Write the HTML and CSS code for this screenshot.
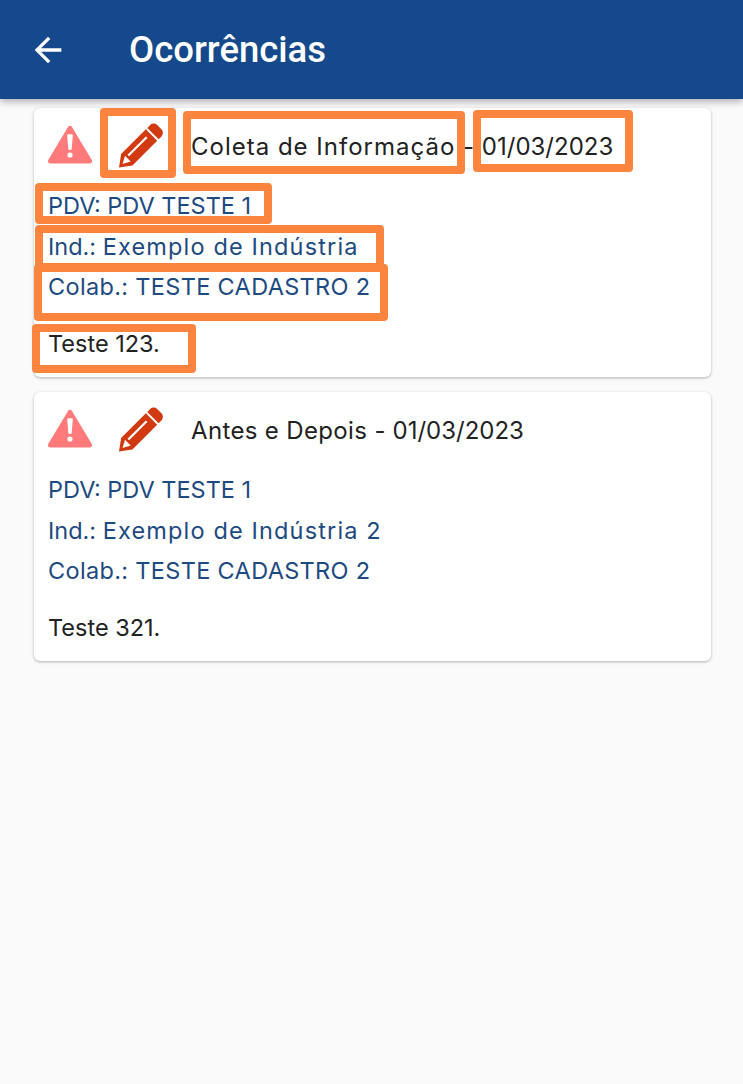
FILE: index.html
```html
<!DOCTYPE html>
<html lang="en">
<head>
    <meta charset="UTF-8">
    <meta name="viewport" content="width=device-width, initial-scale=1.0">
    <title>Ocorrências</title>
    <link rel="stylesheet" href="styles.css">
</head>
<body>
    <svg class="icon-defs">
        <symbol id="alert" viewBox="0 0 44 39">
            <path class="alert-shape" d="M22 3.5L41.5 36H2.5Z"/>
            <path class="alert-mark" d="M19.2 10.5a1.2 1.2 0 0 1 1.2-1.2h3.2a1.2 1.2 0 0 1 1.2 1.2L23.7 24a1 1 0 0 1-1 1h-1.4a1 1 0 0 1-1-1Z"/>
            <circle class="alert-mark" cx="22" cy="30" r="2.6"/>
        </symbol>
        <symbol id="pencil" viewBox="0 0 45 45">
            <g transform="translate(0 44.5) rotate(-45)">
                <path fill-rule="evenodd" d="M0 0L11-8H46V8H11ZM5 0L12.5-4V4ZM15-3H41V-.8H15Z"/>
                <path d="M48-8H52a5 5 0 0 1 5 5V3a5 5 0 0 1-5 5H48Z"/>
            </g>
        </symbol>
    </svg>

    <header class="app-bar">
        <svg class="back-icon" viewBox="0 0 24 24"><path d="M20 11H7.83l5.59-5.59L12 4l-8 8 8 8 1.41-1.41L7.83 13H20v-2z"/></svg>
        <h1 class="app-title">Ocorrências</h1>
    </header>

    <main class="list">
        <section class="card">
            <div class="card-head">
                <svg class="alert-icon"><use href="#alert"/></svg>
                <svg class="pencil-icon"><use href="#pencil"/></svg>
                <span class="card-title"><span class="name-wide">Coleta de Informação -</span> 01/03/2023</span>
            </div>
            <p class="info">PDV: PDV TESTE 1</p>
            <p class="info">Ind.: <span class="info-ind">Exemplo de Indústria</span></p>
            <p class="info info-colab">Colab.: TESTE CADASTRO 2</p>
            <p class="note">Teste 123.</p>

            <!-- orange marks drawn over the screenshot -->
            <span class="mark mark-pencil"></span>
            <span class="mark mark-title"></span>
            <span class="mark mark-date"></span>
            <span class="mark mark-pdv"></span>
            <span class="mark mark-ind"></span>
            <span class="mark mark-colab"></span>
            <span class="mark mark-note"></span>
        </section>

        <section class="card">
            <div class="card-head">
                <svg class="alert-icon"><use href="#alert"/></svg>
                <svg class="pencil-icon"><use href="#pencil"/></svg>
                <span class="card-title"><span class="name-plain">Antes e Depois -</span> 01/03/2023</span>
            </div>
            <p class="info">PDV: PDV TESTE 1</p>
            <p class="info">Ind.: <span class="info-ind">Exemplo de Indústria 2</span></p>
            <p class="info info-colab">Colab.: TESTE CADASTRO 2</p>
            <p class="note">Teste 321.</p>
        </section>
    </main>
</body>
</html>
```

FILE: styles.css
```css
html, body {
    height: 100%;
}
body {
    margin: 0;
    background-color: #fafafa;
    font-family: Inter, "Liberation Sans", sans-serif;
    color: #222;
    overflow: hidden;
}
.icon-defs {
    display: none;
}
.app-bar {
    position: relative;
    z-index: 2;
    display: flex;
    align-items: center;
    height: 99px;
    padding-left: 28px;
    box-sizing: border-box;
    background-color: #15498b;
    box-shadow: 0 2px 8px rgba(0, 0, 0, 0.35);
}
.back-icon {
    width: 40px;
    height: 40px;
    fill: #fff;
}
.app-title {
    margin: 0 0 0 61px;
    font-family: Roboto, sans-serif;
    font-size: 36.5px;
    font-weight: 500;
    color: #fff;
}
.list {
    display: flex;
    flex-direction: column;
    gap: 15px;
    padding: 9px 32px 0 34px;
}
.card {
    position: relative;
    height: 269px;
    padding: 13px 14px 0;
    box-sizing: border-box;
    background-color: #fff;
    border-radius: 6px;
    box-shadow: 0 1px 3px rgba(0, 0, 0, 0.3);
}
.card-head {
    display: flex;
    align-items: center;
    height: 48px;
    margin-bottom: 17px;
}
.alert-icon {
    width: 44px;
    height: 39px;
    margin-top: -2px;
}
.alert-shape {
    fill: #ff7b7b;
    stroke: #ff7b7b;
    stroke-width: 5;
    stroke-linejoin: round;
}
.alert-mark {
    fill: #fff;
}
.pencil-icon {
    width: 45px;
    height: 45px;
    margin-left: 27px;
    fill: #d13a10;
}
.card-title {
    margin-left: 27px;
    padding-top: 2px;
    font-size: 24px;
    white-space: nowrap;
}
.name-wide {
    letter-spacing: 1px;
}
.name-plain {
    letter-spacing: 0.35px;
}
.info {
    margin: 0;
    height: 40.5px;
    line-height: 40.5px;
    font-size: 23.5px;
    color: #1d4a80;
}
.info-ind {
    letter-spacing: 1.15px;
}
.info-colab {
    letter-spacing: 0.33px;
}
.note {
    margin: 16px 0 0;
    line-height: 40px;
    font-size: 23.5px;
}

/* annotation boxes, offsets are from the first card */
.mark {
    position: absolute;
    box-sizing: border-box;
    border: 8px solid #fb843e;
    border-radius: 4px;
}
.mark-pencil { left: 66px; top: 0; width: 76px; height: 70px; }
.mark-title { left: 149px; top: 3px; width: 282px; height: 63px; }
.mark-date { left: 439px; top: 2px; width: 160px; height: 62px; }
.mark-pdv { left: 1px; top: 75px; width: 237px; height: 41px; }
.mark-ind { left: 1px; top: 117px; width: 349px; height: 46px; }
.mark-colab { left: 0; top: 156px; width: 354px; height: 57px; }
.mark-note { left: -2px; top: 216px; width: 164px; height: 49px; }
```
